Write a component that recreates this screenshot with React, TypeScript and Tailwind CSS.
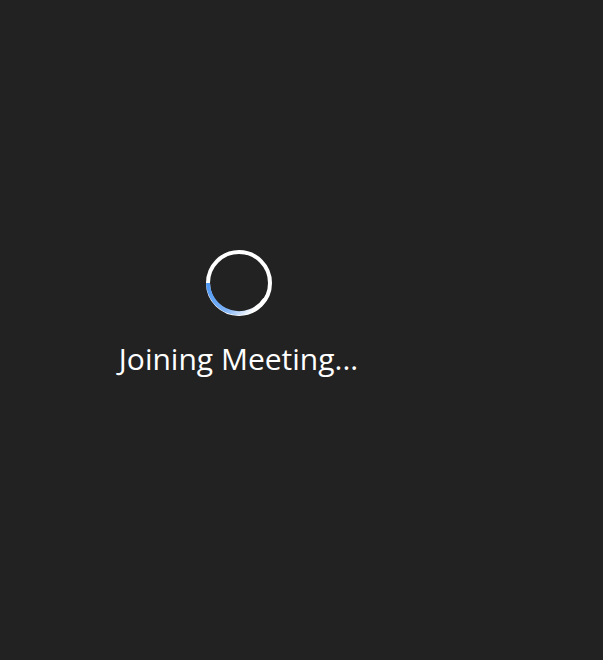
export default function App() {
  return (
    <div className="h-[660px] w-[603px] bg-[#222222] overflow-hidden" style={{ fontFamily: '"Open Sans", sans-serif' }}>
      <div className="flex w-[477px] flex-col items-center pt-[249px]">
        <svg width="68" height="68" viewBox="0 0 68 68">
          <defs>
            <linearGradient id="arc" x1="0" y1="0" x2="1" y2="0.4">
              <stop offset="0" stopColor="#4d97f3" />
              <stop offset="0.6" stopColor="#7fb3f6" />
              <stop offset="1" stopColor="#ffffff" />
            </linearGradient>
          </defs>
          <circle cx="34" cy="34" r="31" fill="none" stroke="#ffffff" strokeWidth="4" />
          <path d="M3 34 A31 31 0 0 0 60 50" fill="none" stroke="url(#arc)" strokeWidth="4" />
        </svg>
        <p className="mt-[27px] text-[30px] leading-none text-white">Joining Meeting...</p>
      </div>
    </div>
  );
}
